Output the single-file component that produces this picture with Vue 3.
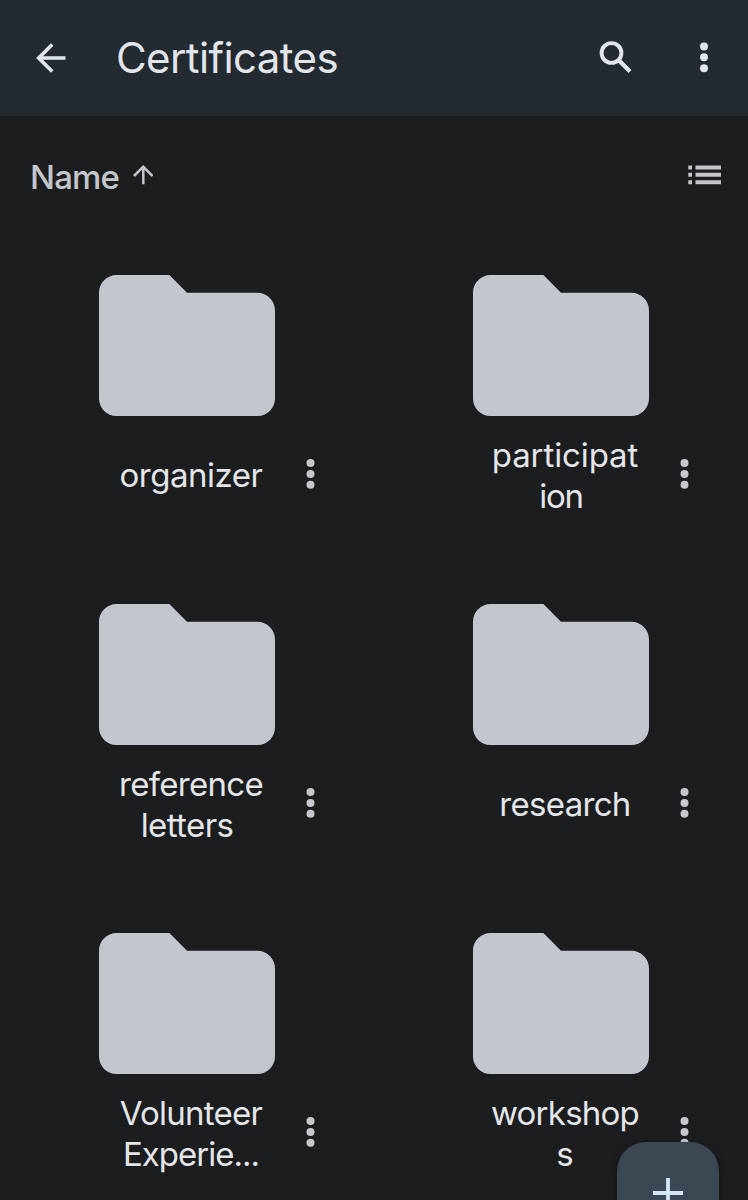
<script setup>
const folders = [
  { id: 1, lines: [{ text: 'organizer', spacing: -0.5 }] },
  { id: 2, lines: [{ text: 'participat', spacing: -0.1 }, { text: 'ion', spacing: -1.3, shift: -4 }] },
  { id: 3, lines: [{ text: 'reference', spacing: -0.7 }, { text: 'letters', spacing: -0.6, shift: -4 }] },
  { id: 4, lines: [{ text: 'research', spacing: -0.7 }] },
  { id: 5, lines: [{ text: 'Volunteer', spacing: -0.75 }, { text: 'Experie...', spacing: -1 }] },
  { id: 6, lines: [{ text: 'workshop', spacing: -0.75 }, { text: 's', spacing: 0 }] },
]
</script>

<template>
  <div class="screen">
    <header class="topbar">
      <button class="iconBtn" aria-label="Back">
        <svg width="30" height="30" viewBox="0 0 30 30" fill="none" stroke="currentColor" stroke-width="3.7">
          <path d="M29.5 15H3M16.2 1.5L2.7 15l13.5 13.5" />
        </svg>
      </button>
      <h1>Certificates</h1>
      <button class="iconBtn search" aria-label="Search">
        <svg width="34" height="34" viewBox="0 0 34 34" fill="none" stroke="currentColor">
          <circle cx="12.5" cy="12" r="9.9" stroke-width="3.9" />
          <path d="M19.5 19L31 30.5" stroke-width="4.2" />
        </svg>
      </button>
      <button class="iconBtn" aria-label="More">
        <svg width="8" height="32" viewBox="0 0 8 32" fill="currentColor">
          <circle cx="4" cy="4.5" r="4" />
          <circle cx="4" cy="15.3" r="4" />
          <circle cx="4" cy="26.2" r="4" />
        </svg>
      </button>
    </header>

    <div class="sortRow">
      <span class="sortLabel">Name</span>
      <svg class="sortArrow" width="20" height="20" viewBox="0 0 20 20" fill="none" stroke="currentColor" stroke-width="2.5">
        <path d="M10.3 19.2V2M1 11l9.3-9.3 9.3 9.3" />
      </svg>
      <svg class="listIcon" width="33" height="20" viewBox="0 0 33 20" fill="currentColor">
        <path d="M.3 .5h3.7v4H.3zM7.5 .5H33v4H7.5zM.3 7.8h3.7v4H.3zM7.5 7.8H33v4H7.5zM.3 15.2h3.7v4H.3zM7.5 15.2H33v4H7.5z" />
      </svg>
    </div>

    <main class="grid">
      <div v-for="f in folders" :key="f.id" class="cell">
        <svg class="folder" width="176" height="141" viewBox="0 0 20 16" preserveAspectRatio="none">
          <path d="M8 0H2C.9 0 0 .9 0 2v12c0 1.1.9 2 2 2h16c1.1 0 2-.9 2-2V4c0-1.1-.9-2-2-2h-8z" />
        </svg>
        <div class="caption">
          <div class="name">
            <span
              v-for="l in f.lines"
              :key="l.text"
              :style="{ letterSpacing: `${l.spacing}px`, marginLeft: `${(l.shift ?? 0) * 2}px` }"
            >{{ l.text }}</span>
          </div>
          <svg width="9" height="30" viewBox="0 0 9 30" fill="currentColor">
            <circle cx="4.5" cy="4" r="4" />
            <circle cx="4.5" cy="14.9" r="4" />
            <circle cx="4.5" cy="25.8" r="4" />
          </svg>
        </div>
      </div>
    </main>

    <button class="fab" aria-label="New">
      <svg width="30" height="30" viewBox="0 0 30 30" stroke="currentColor" stroke-width="3.8">
        <path d="M15 0v30M0 15h30" />
      </svg>
    </button>
  </div>
</template>

<style>
body {
  margin: 0;
  background: #1c1d1f;
}
</style>

<style scoped>
.screen {
  position: relative;
  width: 748px;
  height: 1200px;
  overflow: hidden;
  background: #1c1d1f;
  color: #e3e4e7;
  font-family: Inter, 'Liberation Sans', sans-serif;
}

button {
  padding: 0;
  border: 0;
  background: none;
  color: inherit;
}

svg {
  display: block;
  flex: none;
}

.topbar {
  display: flex;
  align-items: center;
  box-sizing: border-box;
  height: 116px;
  padding: 0 40px 0 36px;
  background: #232a30;
  color: #e2e6eb;
}

h1 {
  flex: 1;
  margin: 0 0 0 50px;
  font-size: 42px;
  font-weight: 400;
  line-height: 50px;
  letter-spacing: -0.6px;
}

.search {
  margin-right: 67px;
}

.sortRow {
  display: flex;
  align-items: center;
  box-sizing: border-box;
  height: 118px;
  padding: 0 27px 0 30px;
  color: #c3c6cb;
}

.sortLabel {
  width: 103px;
  padding-top: 3px;
  font-size: 33px;
  font-weight: 500;
  line-height: 40px;
  letter-spacing: -0.8px;
}

.listIcon {
  margin-left: auto;
}

.grid {
  display: grid;
  grid-template-columns: 374px 374px;
  grid-auto-rows: 329px;
}

.cell {
  display: flex;
  flex-direction: column;
  align-items: center;
  box-sizing: border-box;
  padding-top: 41px;
}

.folder {
  fill: #c2c6ce;
}

.caption {
  display: flex;
  align-items: center;
  align-self: stretch;
  height: 115px;
  color: #c6c8cd;
}

.name {
  display: flex;
  flex-direction: column;
  align-items: center;
  width: 226px;
  margin: 0 2px 0 78px;
  padding-top: 5px;
  font-size: 33px;
  line-height: 41.4px;
  white-space: nowrap;
  color: #e5e6e9;
}

.fab {
  position: absolute;
  top: 1142px;
  left: 617px;
  display: flex;
  align-items: center;
  justify-content: center;
  width: 102px;
  height: 102px;
  border-radius: 29px;
  background: #3b4752;
  color: #d3e5f5;
  box-shadow: 0 3px 8px rgba(0, 0, 0, 0.3);
}
</style>
